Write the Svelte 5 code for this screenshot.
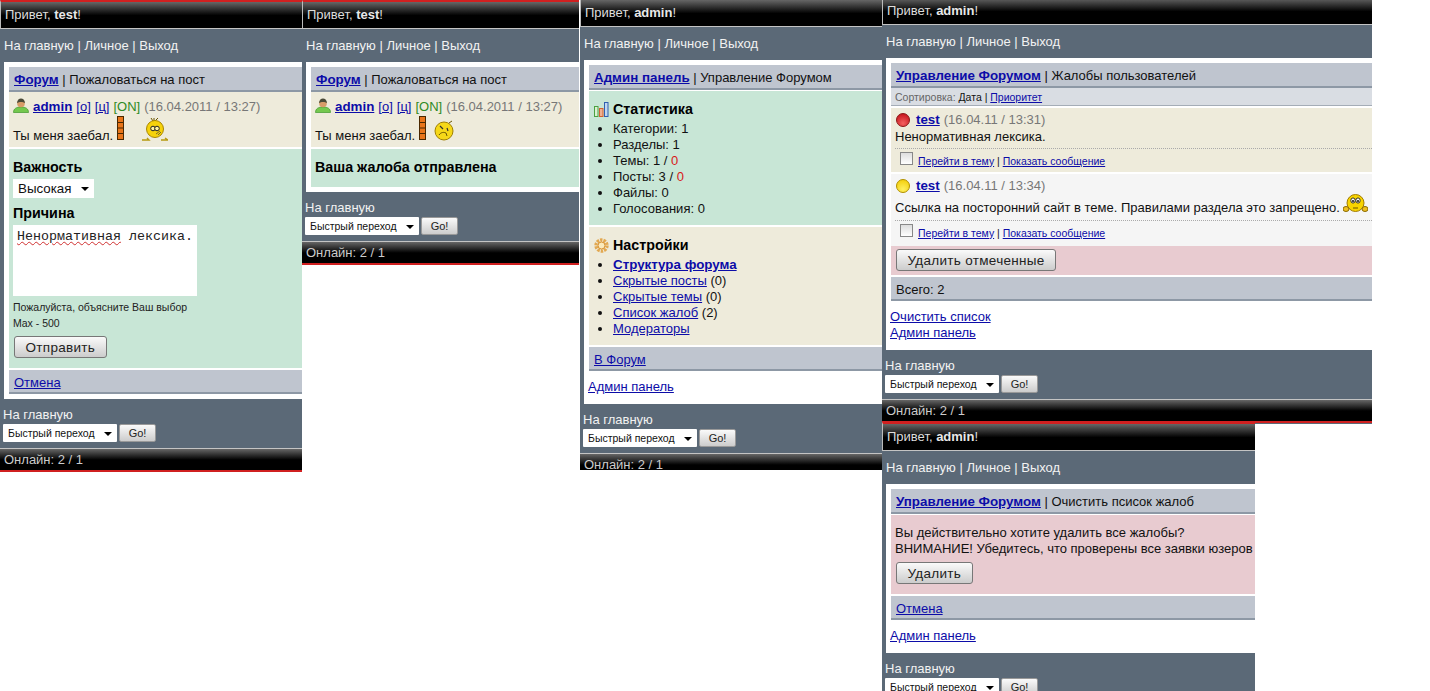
<script>
  const statItems = [
    { label: 'Категории: 1' },
    { label: 'Разделы: 1' },
    { label: 'Темы: 1 / ', red: '0' },
    { label: 'Посты: 3 / ', red: '0' },
    { label: 'Файлы: 0' },
    { label: 'Голосования: 0' },
  ];
  const settingItems = [
    { label: 'Структура форума', strong: true },
    { label: 'Скрытые посты', count: '(0)' },
    { label: 'Скрытые темы', count: '(0)' },
    { label: 'Список жалоб', count: '(2)' },
    { label: 'Модераторы' },
  ];
</script>

{#snippet top(name)}
  <div class="top">Привет, <b>{name}</b>!</div>
  <div class="nav">На главную | Личное | Выход</div>
{/snippet}

{#snippet bottom()}
  <div class="jump">
    <div class="jump-title">На главную</div>
    <div class="jump-row">
      <span class="select-wrap small">
        <select><option>Быстрый переход</option></select>
      </span>
      <button class="go">Go!</button>
    </div>
  </div>
  <div class="online">Онлайн: 2 / 1</div>
{/snippet}

{#snippet userIcon()}
  <svg class="user" width="16" height="15" viewBox="0 0 16 15">
    <path d="M.5 14.500c0-4 3-5.500 7.500-5.500s7.500 1.500 7.500 5.500z" fill="#74c84e" stroke="#3f962c" stroke-width=".7" />
    <circle cx="8" cy="5.500" r="3.800" fill="#d89c68" />
    <path d="M4 5C4.300 1.800 6 .5 8 .5s3.700 1.300 4 4.500C10 3.500 6 3.500 4 5z" fill="#4a4a38" />
  </svg>
{/snippet}

{#snippet rating()}
  <svg class="rating" width="7" height="24" viewBox="0 0 7 24">
    <rect x=".5" y=".5" width="6" height="23" fill="#e8751a" stroke="#4a2800" />
    <path d="M1 6.500h5M1 12h5M1 17.500h5" stroke="#4a2800" />
  </svg>
{/snippet}

{#snippet post(smiley)}
  <div class="post">
    <div class="post-line">
      {@render userIcon()}
      <a href="#u" class="name">admin</a>
      <a href="#o">[о]</a>
      <a href="#c">[ц]</a>
      <span class="on">[ON]</span>
      <span class="date">(16.04.2011 / 13:27)</span>
    </div>
    <div class="post-msg">
      <span>Ты меня заебал.</span>
      {@render rating()}
      {@render smiley()}
    </div>
  </div>
{/snippet}

{#snippet chick()}
  <svg class="chick" width="26" height="24" viewBox="0 0 26 24">
    <path d="M11 4 9 1M13 4l3-3M12 4V1" stroke="#6b5500" fill="none" />
    <circle cx="13" cy="12" r="8.500" fill="#f6d20a" stroke="#a98600" />
    <circle cx="11" cy="11.500" r="2.300" fill="#fff3a0" stroke="#222" />
    <circle cx="15" cy="11.500" r="2.300" fill="#fff3a0" stroke="#222" />
    <path d="M14 17l4-3M16 18l3-3" stroke="#7a6a2a" />
    <path d="M0 23h7l-2-2M19 23h7l-3-2" stroke="#b79a10" fill="none" stroke-width="1.400" />
  </svg>
{/snippet}

{#snippet grumpy()}
  <svg class="grumpy" width="20" height="21" viewBox="0 0 20 21">
    <path d="M15 3l3-2" stroke="#6b5500" />
    <circle cx="10" cy="11" r="9" fill="#f6d818" stroke="#a08000" />
    <path d="M6 6l3 3M13 8l1 3" stroke="#333" stroke-width="1.200" />
    <path d="M5 15c2-3 5-3 7-2l1 3" stroke="#6b5500" fill="none" />
  </svg>
{/snippet}

{#snippet hands()}
  <svg class="hands" width="25" height="21" viewBox="0 0 25 21">
    <circle cx="12.500" cy="9" r="8.500" fill="#f8d400" stroke="#a07a00" />
    <ellipse cx="10" cy="6.500" rx="2.200" ry="2.600" fill="#fff" stroke="#333" />
    <ellipse cx="15" cy="6.500" rx="2.200" ry="2.600" fill="#fff" stroke="#333" />
    <circle cx="10" cy="7" r="1.100" fill="#222" />
    <circle cx="15" cy="7" r="1.100" fill="#222" />
    <path d="M10 14h5" stroke="#6b5500" />
    <ellipse cx="3" cy="15" rx="3" ry="2.500" fill="#f0c020" stroke="#8a6a00" />
    <ellipse cx="22" cy="15" rx="3" ry="2.500" fill="#f0c020" stroke="#8a6a00" />
  </svg>
{/snippet}

{#snippet ball(id, light, base, dark)}
  <svg class="ball" width="14" height="14" viewBox="0 0 14 14">
    <defs>
      <radialGradient {id} cx=".5" cy=".75" r=".7">
        <stop offset="0" stop-color={light} />
        <stop offset="1" stop-color={base} />
      </radialGradient>
    </defs>
    <circle cx="7" cy="7" r="6.500" fill="url(#{id})" stroke={dark} />
  </svg>
{/snippet}

{#snippet report(ballIcon, date, msg, extraClass, smiley)}
  <div class="report {extraClass}">
    <div class="report-head">
      {@render ballIcon()}
      <a href="#t" class="name">test</a>
      <span class="date">({date})</span>
    </div>
    <div class="report-msg">{msg}{#if smiley}{@render smiley()}{/if}</div>
    <div class="report-actions">
      <input type="checkbox" />
      <span><a href="#th">Перейти в тему</a> | <a href="#msg">Показать сообщение</a></span>
    </div>
  </div>
{/snippet}

{#snippet redBall()}{@render ball('ball-red', '#f46060', '#c81820', '#8a1a1a')}{/snippet}
{#snippet yellowBall()}{@render ball('ball-yellow', '#fff060', '#f4d010', '#b09000')}{/snippet}

<main class="collage">
  <!-- 1: complaint form -->
  <section class="panel p1">
    {@render top('test')}
    <div class="box">
      <div class="head"><a href="#f" class="name">Форум</a> | Пожаловаться на пост</div>
      {@render post(chick)}
      <div class="green form">
        <h4>Важность</h4>
        <span class="select-wrap">
          <select><option>Высокая</option></select>
        </span>
        <h4 class="second">Причина</h4>
        <div class="textarea"><span class="typo">Ненормативная</span> лексика.</div>
        <p class="hint">Пожалуйста, объясните Ваш выбор</p>
        <p class="hint">Max - 500</p>
        <button class="btn send">Отправить</button>
      </div>
      <div class="head foot"><a href="#x">Отмена</a></div>
    </div>
    {@render bottom()}
  </section>

  <!-- 2: complaint sent -->
  <section class="panel p2">
    {@render top('test')}
    <div class="box">
      <div class="head"><a href="#f" class="name">Форум</a> | Пожаловаться на пост</div>
      {@render post(grumpy)}
      <div class="green sent"><h4>Ваша жалоба отправлена</h4></div>
    </div>
    {@render bottom()}
  </section>

  <!-- 3: admin panel -->
  <section class="panel p3">
    {@render top('admin')}
    <div class="box">
      <div class="head"><a href="#a" class="name">Админ панель</a> | Управление Форумом</div>
      <div class="green block stats">
        <h4>
          <svg class="block-icon" width="15" height="15" viewBox="0 0 15 15">
            <rect x=".5" y="4.500" width="3.500" height="10" fill="#d8f0d0" stroke="#4aa040" />
            <rect x="5.500" y="6.500" width="3.500" height="8" fill="#f0b090" stroke="#d06030" />
            <rect x="10.500" y=".5" width="3.500" height="14" fill="#c0d8f0" stroke="#3060b0" />
          </svg>
          Статистика
        </h4>
        <ul>
          {#each statItems as item}
            <li>{item.label}{#if item.red}<span class="red">{item.red}</span>{/if}</li>
          {/each}
        </ul>
      </div>
      <div class="block settings">
        <h4>
          <svg class="block-icon" width="15" height="15" viewBox="0 0 15 15">
            <circle cx="7.500" cy="7.500" r="5.500" fill="none" stroke="#e2a850" stroke-width="3.400" stroke-dasharray="2.400 1" />
            <circle cx="7.500" cy="7.500" r="3.500" fill="#faeabc" stroke="#d89030" />
          </svg>
          Настройки
        </h4>
        <ul>
          {#each settingItems as item}
            <li>
              <a href="#s" class:name={item.strong}>{item.label}</a>{#if item.count}{' '}{item.count}{/if}
            </li>
          {/each}
        </ul>
      </div>
      <div class="head foot"><a href="#f">В Форум</a></div>
      <div class="links"><a href="#a">Админ панель</a></div>
    </div>
    {@render bottom()}
  </section>

  <!-- 4: complaints list -->
  <section class="panel p4">
    {@render top('admin')}
    <div class="box">
      <div class="head"><a href="#m" class="name">Управление Форумом</a> | Жалобы пользователей</div>
      <div class="sort"><span class="sort-label">Сортировка:</span> Дата | <a href="#p">Приоритет</a></div>
      {@render report(redBall, '16.04.11 / 13:31', 'Ненормативная лексика.', 'first', null)}
      {@render report(yellowBall, '16.04.11 / 13:34', 'Ссылка на посторонний сайт в теме. Правилами раздела это запрещено.', 'second', hands)}
      <div class="pink actions"><button class="btn">Удалить отмеченные</button></div>
      <div class="head foot total">Всего: 2</div>
      <div class="links"><a href="#c">Очистить список</a><br /><a href="#a">Админ панель</a></div>
    </div>
    {@render bottom()}
  </section>

  <!-- 5: clear complaints -->
  <section class="panel p5">
    {@render top('admin')}
    <div class="box">
      <div class="head"><a href="#m" class="name">Управление Форумом</a> | Очистить псисок жалоб</div>
      <div class="pink confirm">
        <p>Вы действительно хотите удалить все жалобы?<br />ВНИМАНИЕ! Убедитесь, что проверены все заявки юзеров</p>
        <button class="btn">Удалить</button>
      </div>
      <div class="head foot"><a href="#x">Отмена</a></div>
      <div class="links"><a href="#a">Админ панель</a></div>
    </div>
    {@render bottom()}
  </section>
</main>

<style>
  :global(body) {
    background: #fff;
  }

  .collage {
    position: relative;
    width: 1430px;
    height: 691px;
    overflow: hidden;
    font: 13px/16px 'Liberation Sans', Arial, sans-serif;
    color: #111;
  }

  /* the screenshot is a collage of cropped pages */
  .panel {
    position: absolute;
    overflow: hidden;
    background: #5b6977;
  }
  .p1 { left: 0; top: 0; width: 302px; height: 472px; }
  .p2 { left: 302px; top: 0; width: 277px; height: 265px; }
  .p3 { left: 580px; top: -2px; width: 302px; height: 472px; }
  .p4 { left: 882px; top: -4px; width: 490px; height: 428px; }
  .p5 { left: 882px; top: 422px; width: 373px; height: 269px; }

  a {
    color: #0c0ca8;
    text-decoration: underline;
  }
  a.name {
    font-weight: bold;
    font-size: 13.35px;
  }

  .top {
    height: 26px;
    border-top: 2px solid #d02020;
    border-left: 1px solid #bbb;
    border-bottom: 1px solid #c4c4c4;
    padding-left: 4px;
    line-height: 25px;
    color: #ddd;
    background: linear-gradient(#666, #000 52%);
  }
  .top b {
    color: #e8e8e8;
  }

  .nav {
    height: 33px;
    padding-left: 4px;
    line-height: 33px;
    color: #f2f2f2;
  }

  .box {
    margin-left: 4px;
    padding: 5px 0 5px 5px;
    background: #fff;
  }

  .head {
    height: 23px;
    padding-left: 5px;
    line-height: 25px;
    background: #bfc5cf;
    border-bottom: 2px solid #8d98a5;
    box-sizing: content-box;
  }
  .head.foot {
    height: 22px;
    margin-top: 2px;
    line-height: 25px;
  }

  .post {
    height: 55px;
    padding-left: 4px;
    background: #eeebdb;
  }
  .post-line {
    display: flex;
    align-items: center;
    gap: 4px;
    height: 30px;
    white-space: nowrap;
  }
  .user {
    margin-right: 0;
    margin-top: -4px;
  }
  .on {
    color: #2f8a24;
  }
  .date {
    color: #777;
  }
  .post-msg {
    position: relative;
    height: 25px;
    padding-top: 6px;
    box-sizing: border-box;
  }
  .rating {
    position: absolute;
    left: 104px;
    top: -6px;
  }
  .chick {
    position: absolute;
    left: 129px;
    top: -5px;
  }
  .grumpy {
    position: absolute;
    left: 119px;
    top: -2px;
  }
  .hands {
    position: absolute;
    right: 4px;
    top: -1px;
  }

  .green {
    background: #c8e6d6;
  }
  h4 {
    margin: 0;
    font-size: 14.3px;
    line-height: 16px;
    font-weight: bold;
    color: #000;
  }

  .form {
    height: 219px;
    margin-top: 2px;
    padding: 10px 0 0 4px;
    box-sizing: border-box;
  }
  .form .second {
    margin-top: 7px;
  }

  .select-wrap {
    position: relative;
    display: block;
    width: 81px;
    height: 19px;
    margin-top: 4px;
    background: #fff;
  }
  .select-wrap::after {
    content: '';
    position: absolute;
    right: 5px;
    top: 8px;
    border: 4px solid transparent;
    border-top-color: #000;
    border-bottom: 0;
  }
  select {
    display: block;
    width: 100%;
    height: 100%;
    padding: 0 0 0 5px;
    border: 0;
    background: transparent;
    font: 13.33px 'Liberation Sans', Arial, sans-serif;
    color: #111;
    appearance: none;
  }
  .select-wrap.small {
    width: 114px;
    height: 18px;
    margin: 0;
    border-radius: 1px;
  }
  .select-wrap.small select {
    padding-left: 5px;
    font-size: 10.5px;
  }
  .select-wrap.small::after {
    top: 8px;
  }

  .textarea {
    width: 184px;
    height: 71px;
    margin-top: 4px;
    padding: 4px 4px 0;
    box-sizing: border-box;
    background: #fff;
    font: 13.33px/16px 'Liberation Mono', 'Courier New', monospace;
    color: #222;
  }
  .typo {
    text-decoration: underline wavy #d03030 1px;
  }

  .hint {
    margin: 0;
    font-size: 10.5px;
    line-height: 16px;
    color: #222;
  }
  .textarea + .hint {
    margin-top: 3px;
  }

  .btn {
    display: block;
    height: 22px;
    padding: 0 10.500px;
    border: 1px solid #777;
    border-radius: 3px;
    background: linear-gradient(#fafafa, #ccc);
    font: 13.5px 'Liberation Sans', Arial, sans-serif;
    letter-spacing: .3px;
    color: #222;
  }
  .send {
    margin: 5px 0 0 1px;
  }

  .sent {
    height: 38px;
    margin-top: 2px;
    padding: 10px 0 0 4px;
    box-sizing: border-box;
  }

  .block {
    padding: 10px 0 0 5px;
    box-sizing: border-box;
  }
  .block h4 {
    display: flex;
    align-items: center;
    gap: 4px;
  }
  .stats {
    height: 134px;
    margin-top: 1px;
  }
  .settings {
    height: 118px;
    margin-top: 2px;
    background: #eeebdb;
  }
  ul {
    margin: 4px 0 0;
    padding: 0 0 0 19px;
  }
  li {
    height: 16px;
  }
  .red {
    color: #d81818;
  }

  .links {
    height: 28px;
    padding: 8px 0 0;
    margin-left: -1px;
    box-sizing: border-box;
  }

  .jump {
    height: 49px;
    padding: 8px 0 0 3px;
    box-sizing: border-box;
    color: #f2f2f2;
  }
  .jump-title {
    height: 17px;
  }
  .jump-row {
    display: flex;
    gap: 2px;
  }
  .go {
    width: 37px;
    height: 18px;
    padding: 0;
    border: 1px solid #999;
    border-radius: 2px;
    background: linear-gradient(#fafafa, #ccc);
    font: 11px 'Liberation Sans', Arial, sans-serif;
    color: #222;
  }

  .online {
    height: 21px;
    padding-left: 4px;
    border-top: 1px solid #c4c4c4;
    border-bottom: 2px solid #d02020;
    line-height: 21px;
    color: #ccc;
    background: linear-gradient(#666, #000 52%);
  }

  .sort {
    height: 17px;
    padding-left: 4px;
    line-height: 18px;
    font-size: 10.5px;
    background: #d9dde3;
    border-bottom: 1px solid #a5adb7;
    color: #111;
  }
  .sort-label {
    color: #666;
  }

  .report {
    margin-top: 2px;
    padding-left: 4px;
    box-sizing: border-box;
  }
  .report.first {
    height: 64px;
    background: #eeebdb;
  }
  .report.second {
    height: 72px;
    background: #f5f5f5;
  }
  .report-head {
    display: flex;
    align-items: center;
    gap: 4px;
    height: 21px;
    padding-top: 3px;
    box-sizing: border-box;
  }
  .second .report-head {
    padding-top: 2px;
  }
  .ball {
    margin-left: 1px;
    margin-right: 2px;
  }
  .report-msg {
    position: relative;
    height: 20px;
    line-height: 15px;
    border-bottom: 1px dotted #aaa;
    box-sizing: border-box;
    white-space: nowrap;
  }
  .report.second .report-msg {
    height: 26px;
    padding-top: 5px;
    line-height: 16px;
  }
  .report-actions {
    display: flex;
    align-items: center;
    height: 23px;
    padding-left: 5px;
    font-size: 10.5px;
    color: #111;
    white-space: nowrap;
  }
  .report-actions input {
    flex: none;
    width: 13px;
    height: 13px;
    margin: -4px 5px 0 0;
    appearance: none;
    border: 1px solid #888;
    background: linear-gradient(#ddd, #fff);
  }

  .pink {
    background: #e8cbd0;
  }
  .actions {
    height: 29px;
    padding: 3px 0 0 5px;
    box-sizing: border-box;
  }
  .total {
    color: #111;
  }
  .p4 .links {
    height: 44px;
  }

  .confirm {
    height: 79px;
    margin-top: 1px;
    padding: 10px 0 0 4px;
    box-sizing: border-box;
  }
  .confirm p {
    margin: 0 0 5px;
  }
  .confirm .btn {
    margin-left: 1px;
  }
</style>
